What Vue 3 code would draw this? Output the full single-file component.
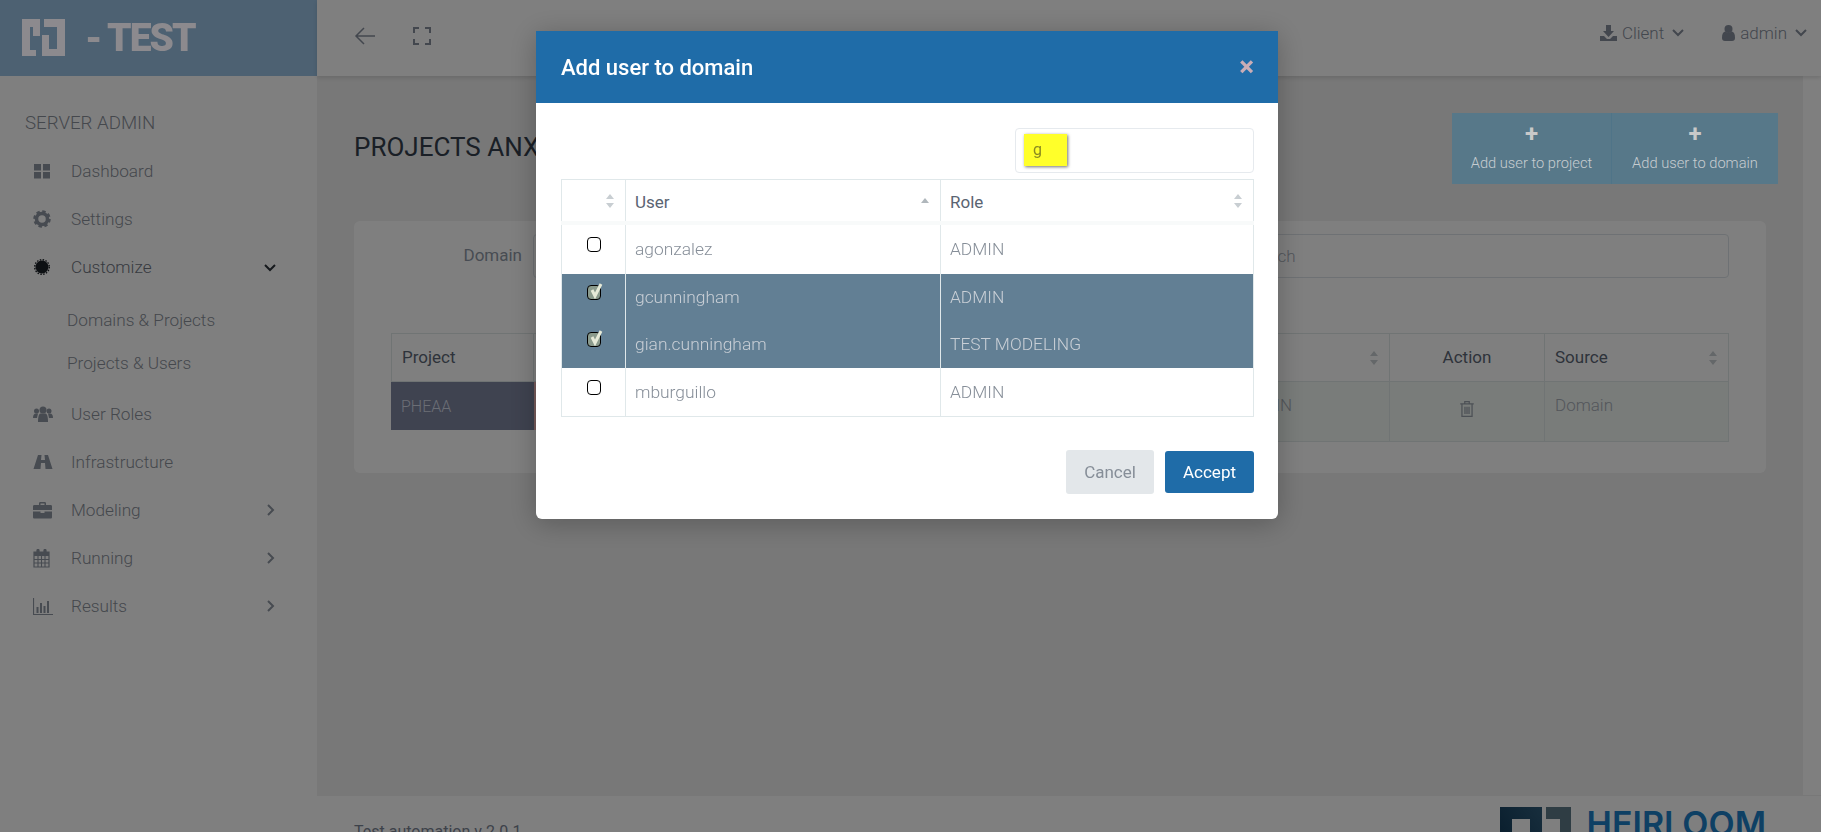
<template>
  <div class="app">
    <aside class="sidebar">
      <div class="brand">
        <svg class="brand-logo lifted" width="44" height="38" viewBox="0 0 44 38">
          <path d="M0 0H18V17H11V8H8V31H14V37H0Z" fill="#8c8a8e" />
          <path d="M22 0H43V37H20V16H27V30H35V8H22Z" fill="#8c8a8e" />
        </svg>
        <span class="brand-text lifted">- TEST</span>
      </div>
      <div class="side-title">SERVER ADMIN</div>
      <nav class="menu">
        <template v-for="item in menu" :key="item.label">
          <div class="menu-item" :class="{ active: item.children }">
            <svg class="menu-icon" width="20" height="20" viewBox="0 0 20 20" v-html="item.icon"></svg>
            <span class="menu-label">{{ item.label }}</span>
            <svg v-if="item.arrow" class="chevron" :class="'to-' + item.arrow" width="14" height="14" viewBox="0 0 14 14">
              <path d="M5 2l5 5-5 5" fill="none" stroke="currentColor" stroke-width="2" />
            </svg>
          </div>
          <div v-if="item.children" class="submenu">
            <div v-for="sub in item.children" :key="sub" class="submenu-item">{{ sub }}</div>
          </div>
        </template>
      </nav>
    </aside>

    <div class="right">
      <header class="topbar">
        <svg class="back" width="22" height="20" viewBox="0 0 22 20">
          <path d="M21 10H2M10 2l-8 8 8 8" fill="none" stroke="currentColor" stroke-width="1.5" />
        </svg>
        <svg class="expand" width="18" height="18" viewBox="0 0 18 18">
          <path d="M1 6V1h5M12 1h5v5M17 12v5h-5M6 17H1v-5" fill="none" stroke="currentColor" stroke-width="2" />
        </svg>
        <div class="spacer"></div>
        <div class="top-link client">
          <svg width="17" height="16" viewBox="0 0 17 16">
            <path d="M6 0h5v6h3l-5.500 6L3 6h3zM0 11h4l3 3h3l3-3h4v5H0z" fill="currentColor" />
          </svg>
          <span>Client</span>
          <svg class="top-chev" width="12" height="8" viewBox="0 0 12 8">
            <path d="M1 1l5 5 5-5" fill="none" stroke="currentColor" stroke-width="2" />
          </svg>
        </div>
        <div class="top-link">
          <svg width="13" height="16" viewBox="0 0 13 16">
            <circle cx="6.500" cy="4" r="4" fill="currentColor" />
            <path d="M0 13c0-4 1-6 3-6.500 2 1.500 5 1.500 7 0 2 .5 3 2.500 3 6.500 0 2-1 3-3 3H3c-2 0-3-1-3-3z" fill="currentColor" />
          </svg>
          <span>admin</span>
          <svg class="top-chev" width="12" height="8" viewBox="0 0 12 8">
            <path d="M1 1l5 5 5-5" fill="none" stroke="currentColor" stroke-width="2" />
          </svg>
        </div>
      </header>

      <div class="body-row">
        <main class="main">
          <div class="page-head">
            <h1>PROJECTS ANX</h1>
            <div class="actions">
              <div class="action-btn">
                <span class="plus">+</span>
                <span>Add user to project</span>
              </div>
              <div class="action-btn">
                <span class="plus">+</span>
                <span>Add user to domain</span>
              </div>
            </div>
          </div>

          <section class="card">
            <div class="filters">
              <label class="filter-label">Domain</label>
              <div class="select-box"></div>
              <div class="card-search">Search</div>
            </div>
            <div class="grid-table">
              <div class="gt-head">
                <div class="gt-cell c-project">Project</div>
                <div class="gt-cell c-user">User</div>
                <div class="gt-cell c-role">
                  Role
                  <svg class="sort" width="10" height="16" viewBox="0 0 10 16"><path d="M5 1l4 5H1zM5 15l4-5H1z" /></svg>
                </div>
                <div class="gt-cell c-action">Action</div>
                <div class="gt-cell c-source">
                  Source
                  <svg class="sort" width="10" height="16" viewBox="0 0 10 16"><path d="M5 1l4 5H1zM5 15l4-5H1z" /></svg>
                </div>
              </div>
              <div class="gt-row">
                <div class="gt-cell c-project pheaa">PHEAA</div>
                <div class="gt-cell c-user tinted"></div>
                <div class="gt-cell c-role tall">ADMIN</div>
                <div class="gt-cell c-action tall">
                  <svg class="trash" width="16" height="18" viewBox="0 0 14 16">
                    <path d="M1 3.500h12M5 3V1.500h4V3M2.500 3.500V14.500h9V3.500M5.200 6v6.500M7 6v6.500M8.800 6v6.500" fill="none" stroke="currentColor" stroke-width="1.100" />
                  </svg>
                </div>
                <div class="gt-cell c-source tall">Domain</div>
              </div>
            </div>
          </section>
        </main>
        <div class="strip"></div>
      </div>

      <footer class="footer">
        <span class="version">Test automation v 2.0.1</span>
        <div class="heirloom">
          <svg width="72" height="72" viewBox="0 0 72 72">
            <defs>
              <linearGradient id="hl-a" x1="1" y1="0" x2="0" y2="1">
                <stop offset="0" stop-color="#2f5c7a" />
                <stop offset="1" stop-color="#08304f" />
              </linearGradient>
            </defs>
            <path d="M0 0H42V72H0ZM12 12V60H30V12Z" fill="url(#hl-a)" fill-rule="evenodd" />
            <path d="M46 0H71V72H46V60H60V12H46Z" fill="#5f7a88" />
          </svg>
          <span class="heirloom-text">HEIRLOOM</span>
        </div>
      </footer>
    </div>

    <div class="backdrop"></div>

    <div class="modal">
      <div class="modal-head">
        <span class="modal-title">Add user to domain</span>
        <span class="close">×</span>
      </div>
      <div class="modal-body">
        <div class="search-row">
          <div class="search-field">
            <span class="mark">g</span>
          </div>
        </div>
        <table class="users">
          <thead>
            <tr>
              <th class="col-check">
                <svg class="sort" width="10" height="16" viewBox="0 0 10 16"><path d="M5 1l4 5H1zM5 15l4-5H1z" /></svg>
              </th>
              <th class="col-user">
                User
                <svg class="sort asc" width="10" height="16" viewBox="0 0 10 16"><path d="M5 5l4 5H1z" /></svg>
              </th>
              <th>
                Role
                <svg class="sort" width="10" height="16" viewBox="0 0 10 16"><path d="M5 1l4 5H1zM5 15l4-5H1z" /></svg>
              </th>
            </tr>
          </thead>
          <tbody>
            <tr v-for="row in users" :key="row.name" :class="{ selected: row.checked }">
              <td class="col-check">
                <span class="check" :class="{ on: row.checked }">
                  <svg v-if="row.checked" width="15" height="16" viewBox="0 0 15 16">
                    <path d="M4 7l3 6 6-12" fill="none" stroke="#e6ead8" stroke-width="3" />
                  </svg>
                </span>
              </td>
              <td>{{ row.name }}</td>
              <td>{{ row.role }}</td>
            </tr>
          </tbody>
        </table>
        <div class="modal-foot">
          <button class="btn cancel">Cancel</button>
          <button class="btn accept">Accept</button>
        </div>
      </div>
    </div>
  </div>
</template>

<script setup>
const menu = [
  {
    label: "Dashboard",
    icon: '<path d="M1 3h7v6.500H1zM10 3h7v6.500h-7zM1 11h7v6.500H1zM10 11h7v6.500h-7z" fill="currentColor"/>',
  },
  {
    label: "Settings",
    icon: '<circle cx="9" cy="10" r="5.500" fill="none" stroke="currentColor" stroke-width="3.500"/><circle cx="9" cy="10" r="7.500" fill="none" stroke="currentColor" stroke-width="2.500" stroke-dasharray="3.400 2.490"/>',
  },
  {
    label: "Customize",
    arrow: "down",
    children: ["Domains & Projects", "Projects & Users"],
    icon: '<circle cx="9" cy="10" r="6.500" fill="#1b2026"/><circle cx="9" cy="10" r="7.300" fill="none" stroke="#1b2026" stroke-width="1.400" stroke-dasharray="1.500 1.400"/>',
  },
  {
    label: "User Roles",
    icon: '<circle cx="10" cy="6" r="3.500" fill="currentColor"/><circle cx="3.500" cy="7" r="2.500" fill="currentColor"/><circle cx="16" cy="7" r="2.500" fill="currentColor"/><path d="M0 14c0-3 1-4.500 3-4.500h2L4 14zM20 14c0-3-1-4.500-3-4.500h-2l1 4.500zM5 18c0-6 1-8.500 3-8.500h4c2 0 3 2.500 3 8.500z" fill="currentColor"/>',
  },
  {
    label: "Infrastructure",
    icon: '<path d="M5 3h3.500L8 8h4l-.5-5H15l4.500 14h-7L12 11H8l-.5 6H.5z" fill="currentColor"/>',
  },
  {
    label: "Modeling",
    arrow: "right",
    icon: '<path d="M6 5V3.500C6 2.500 6.500 2 7.500 2h4c1 0 1.500.5 1.500 1.500V5h4.500C18.500 5 19 5.500 19 6.500V10H0V6.500C0 5.500.5 5 1.500 5zM7.500 5h4V3.500h-4zM0 11.500h7.500V13h4v-1.500H19V17c0 1-.5 1.500-1.500 1.500h-16C.5 18.500 0 18 0 17z" fill="currentColor" fill-rule="evenodd"/>',
  },
  {
    label: "Running",
    arrow: "right",
    icon: '<path d="M1 4h3V2h2v2h5V2h2v2h3v15H1z" fill="none" stroke="currentColor" stroke-width="1.200"/><path d="M1 4h15v4H1z" fill="currentColor"/><path d="M4 1h2v4H4zM11 1h2v4h-2z" fill="currentColor"/><path d="M1 11.500h15M1 15h15M5 8v11M8.500 8v11M12 8v11" stroke="currentColor" stroke-width="1.100"/>',
  },
  {
    label: "Results",
    arrow: "right",
    icon: '<path d="M.5 2v16.500H20" fill="none" stroke="currentColor" stroke-width="1.200"/><path d="M3.500 11h2v6h-2zM7 7h2v10H7zM10.500 10h2v7h-2zM14 5h2v12h-2z" fill="currentColor"/>',
  },
];

const users = [
  { name: "agonzalez", role: "ADMIN", checked: false },
  { name: "gcunningham", role: "ADMIN", checked: true },
  { name: "gian.cunningham", role: "TEST MODELING", checked: true },
  { name: "mburguillo", role: "ADMIN", checked: false },
];
</script>

<style>
html,
body {
  margin: 0;
  height: 100%;
  overflow: hidden;
}
</style>

<style scoped>
.app {
  display: flex;
  height: 832px;
  overflow: hidden;
  font-family: Roboto, "Liberation Sans", sans-serif;
  font-weight: 300;
  font-size: 16px;
  background: #fff;
}

.lifted {
  position: relative;
  z-index: 11;
}

.sidebar {
  width: 317px;
  flex-shrink: 0;
  background: #fff;
  color: #8a909a;
}

.brand {
  height: 76px;
  background: #9ac2e4;
  border-bottom: 1px solid #fff;
  display: flex;
  align-items: center;
  padding-left: 22px;
  box-sizing: content-box;
}

.brand-logo {
  margin-right: 19px;
}

.brand-text {
  font-size: 39px;
  font-weight: 900;
  color: #8c8a8e;
  letter-spacing: -2px;
}

.side-title {
  margin: 35px 0 13px 25px;
  font-size: 18.700px;
  line-height: 22px;
}

.menu-item {
  height: 48px;
  display: flex;
  align-items: center;
  padding-left: 33px;
  font-size: 17.200px;
}

.menu-item.active {
  color: #6e747e;
}

.menu-icon {
  width: 20px;
  margin-right: 18px;
  color: #8e96a2;
  flex-shrink: 0;
}

.menu-label {
  flex: 1;
}

.chevron {
  margin-right: 40px;
  color: #8e96a2;
}

.chevron.to-down {
  transform: rotate(90deg);
  color: #2c333b;
}

.submenu {
  padding: 8px 0 5px;
}

.submenu-item {
  padding-left: 67px;
  height: 43px;
  line-height: 43px;
  font-size: 17.200px;
}

.right {
  flex: 1;
  min-width: 0;
  display: flex;
  flex-direction: column;
}

.topbar {
  height: 76px;
  flex-shrink: 0;
  box-sizing: border-box;
  background: #fff;
  box-shadow: 0 2px 4px rgba(0, 0, 0, 0.12);
  display: flex;
  align-items: center;
  padding: 0 0 5px 37px;
  color: #868e9c;
  position: relative;
}

.back {
  margin-right: 37px;
}

.spacer {
  flex: 1;
}

.top-link {
  display: flex;
  align-items: center;
  gap: 5px;
  font-size: 17px;
  margin: 0 14px 6px 0;
}

.top-link.client {
  margin-right: 38px;
}

.top-chev {
  margin-left: 3px;
}

.body-row {
  height: 719px;
  flex-shrink: 0;
  display: flex;
}

.main {
  width: 1486px;
  background: #f0f0f0;
}

.strip {
  flex: 1;
  background: #fff;
}

.page-head {
  height: 71px;
  margin-top: 37px;
  padding: 0 25px 0 37px;
  display: flex;
  align-items: center;
  justify-content: space-between;
}

.page-head h1 {
  margin: 0 0 4px;
  font-size: 26px;
  font-weight: 400;
  color: #343e4c;
}

.actions {
  display: flex;
  height: 71px;
  position: relative;
  z-index: 11;
  background: #577889;
  color: #c6ccd0;
  font-size: 14.700px;
}

.action-btn {
  width: 159px;
  display: flex;
  flex-direction: column;
  align-items: center;
  padding-top: 7px;
  box-sizing: border-box;
  border-left: 1px solid #4f7488;
}

.action-btn:first-child {
  border-left: 0;
}

.action-btn + .action-btn {
  width: 167px;
}

.plus {
  font-size: 24px;
  line-height: 28px;
  font-weight: 700;
  margin-bottom: 6px;
  color: #c9c9c9;
}

.card {
  margin: 37px 37px 0 37px;
  height: 252px;
  box-sizing: border-box;
  background: #fff;
  border-radius: 6px;
  padding: 13px 37px 0 37px;
}

.filters {
  height: 44px;
  display: flex;
  align-items: center;
}

.filter-label {
  width: 131px;
  flex-shrink: 0;
  text-align: right;
  margin-right: 11px;
  font-size: 17px;
  margin-top: -2px;
  color: #8f98a6;
  font-weight: 400;
}

.select-box {
  width: 567px;
  height: 42px;
  border: 1px solid #dde3e8;
  border-radius: 4px;
}

.card-search {
  margin-left: 134px;
  flex: 1;
  height: 42px;
  line-height: 42px;
  border: 1px solid #dde3e8;
  border-radius: 4px;
  padding-left: 7px;
  font-size: 17px;
  color: #a8aeb8;
}

.grid-table {
  margin-top: 55px;
  font-size: 17px;
}

.gt-head,
.gt-row {
  display: flex;
}

.gt-head .gt-cell {
  height: 49px;
  line-height: 47px;
  font-weight: 400;
  color: #5d6776;
  border: 1px solid #e0e8e8;
  border-left-width: 0;
}

.gt-head .gt-cell:first-child {
  border-left-width: 1px;
}

.gt-cell {
  position: relative;
  box-sizing: border-box;
  padding: 0 10px;
}

.c-project {
  width: 143px;
}

.c-user {
  width: 695px;
}

.c-role {
  width: 161px;
}

.c-action {
  width: 155px;
  text-align: center;
}

.c-source {
  flex: 1;
}

.pheaa {
  height: 48px;
  line-height: 50px;
  font-size: 16px;
  background: #7e86a0;
  color: #d6dcea;
}

.tinted {
  height: 48px;
  background: #f0b8b8;
}

.tall {
  height: 60px;
  background: #f2f8f4;
  border: 1px solid #e0e8e8;
  border-top: 0;
  border-left-width: 0;
  line-height: 46px;
  color: #a8aeb8;
}

.trash {
  position: relative;
  top: 7px;
  color: #98a0aa;
}

.sort {
  position: absolute;
  right: 10px;
  top: 16px;
  fill: #c8ced2;
}

.backdrop {
  position: fixed;
  inset: 0;
  background: #000;
  opacity: 0.5;
  z-index: 10;
}

.modal {
  position: fixed;
  left: 536px;
  top: 31px;
  width: 742px;
  height: 488px;
  background: #fff;
  border-radius: 0 0 6px 6px;
  box-shadow: 0 4px 28px rgba(0, 0, 0, 0.25);
  z-index: 20;
}

.modal-head {
  height: 72px;
  background: #1f6ca8;
  display: flex;
  align-items: center;
  justify-content: space-between;
  padding: 0 24px 0 25px;
}

.modal-title {
  font-size: 22px;
  font-weight: 500;
  color: #fff;
}

.close {
  font-size: 28px;
  font-weight: 700;
  color: #c9adb6;
  line-height: 1;
}

.modal-body {
  padding: 25px 24px 0 25px;
}

.search-row {
  display: flex;
  justify-content: flex-end;
}

.search-field {
  width: 239px;
  height: 45px;
  box-sizing: border-box;
  border: 1px solid #e6eaee;
  border-radius: 4px;
  padding: 5px 8px;
}

.mark {
  display: block;
  width: 43px;
  height: 32px;
  line-height: 31px;
  padding-left: 9px;
  box-sizing: border-box;
  background: #ffff2a;
  color: #8a8a20;
  font-weight: 400;
  box-shadow: 1px 1px 3px rgba(0, 0, 0, 0.55);
}

.users {
  width: 693px;
  margin-top: 6px;
  border-collapse: collapse;
  table-layout: fixed;
  border: 1px solid #e0e8ea;
  font-size: 17.400px;
}

.users th {
  height: 43px;
  padding: 4px 9px 0;
  box-sizing: border-box;
  text-align: left;
  font-size: 17px;
  font-weight: 400;
  color: #5a6472;
  border-right: 1px solid #e0e8ea;
  background: #fff;
  position: relative;
  border-bottom: 4px solid #f8fafa;
}

.users .sort {
  top: 13px;
  right: 10px;
}

.users .asc {
  fill: #b0b7bc;
}

.users td {
  height: 49px;
  padding: 0 9px;
  box-sizing: border-box;
  color: #868e98;
  border-right: 1px solid #e0e8ea;
}

.users tbody tr:first-child td {
  height: 51px;
}

.users tr.selected td {
  height: 47px;
  background: #627f94;
  color: #c9cfd6;
}

.users th.col-check,
.users td.col-check {
  width: 64px;
  padding: 0;
  position: relative;
}

.col-user {
  width: 315px;
}

.check {
  position: absolute;
  left: 25px;
  top: 12px;
  width: 14px;
  height: 15px;
  box-sizing: border-box;
  border: 1px solid #000;
  border-radius: 4px;
  background: #fff;
}

.check.on {
  background: #8a9a8c;
  top: 11px;
}

.check svg {
  position: absolute;
  left: 0;
  top: -3px;
}

.modal-foot {
  display: flex;
  justify-content: flex-end;
  align-items: center;
  gap: 11px;
  margin-top: 33px;
}

.btn {
  border: 0;
  border-radius: 3px;
  font-family: inherit;
  font-size: 17px;
  font-weight: 400;
}

.cancel {
  width: 88px;
  height: 44px;
  background: #e3e7ea;
  color: #868e98;
}

.accept {
  width: 89px;
  height: 42px;
  background: #1f6ca8;
  color: #fff;
}

.footer {
  flex: 1;
  background: #fff;
  border-top: 1px solid #f0f0f0;
  display: flex;
  justify-content: space-between;
  padding-left: 37px;
  overflow: hidden;
}

.version {
  margin-top: 26px;
  color: #7a8494;
  font-weight: 400;
  white-space: nowrap;
}

.heirloom {
  display: flex;
  gap: 15px;
  margin-right: 55px;
  padding-top: 11px;
}

.heirloom-text {
  font-family: Inter, "Open Sans", sans-serif;
  font-weight: 600;
  font-size: 34px;
  line-height: 40px;
  margin-top: -3px;
  color: #1c80c8;
}
</style>
